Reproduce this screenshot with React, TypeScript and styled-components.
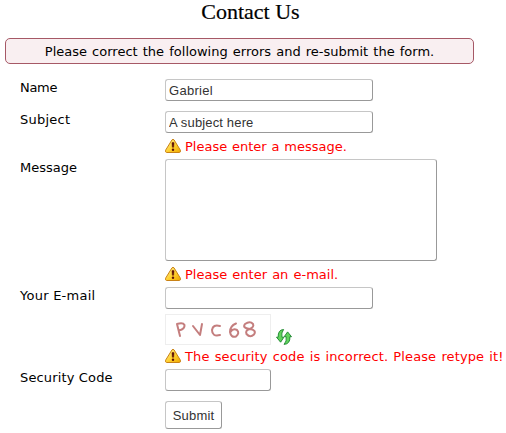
import React from "react";
import styled, { createGlobalStyle } from "styled-components";

const GlobalStyle = createGlobalStyle`
  * { box-sizing: border-box; }
  body {
    margin: 0;
    background: #fff;
    color: #000;
    font-family: "DejaVu Sans", Verdana, sans-serif;
    font-size: 13px;
    overflow: hidden;
  }
`;

const Page = styled.main`
  width: 506px;
  height: 433px;
  overflow: hidden;
`;

const Title = styled.h1`
  margin: 0;
  height: 38px;
  text-align: center;
  font: 400 22px/23px "Liberation Serif", "Times New Roman", serif;
  padding-right: 5px;
  -webkit-text-stroke: 0.2px #000;
`;

const Banner = styled.div`
  width: 469px;
  height: 26px;
  margin-left: 5px;
  padding-top: 1px;
  border: 1px solid #a65866;
  border-radius: 5px;
  background: #f9eff1;
  display: flex;
  align-items: center;
  justify-content: center;
`;

const Text = styled.span<{ $spacing?: number; $words?: number }>`
  white-space: nowrap;
  line-height: 18px;
  letter-spacing: ${(p) => p.$spacing ?? 0}px;
  word-spacing: ${(p) => p.$words ?? 0}px;
`;

const Form = styled.form`
  display: flex;
  flex-direction: column;
  padding-top: 15px;
`;

const Row = styled.div<{ $gap: number }>`
  display: grid;
  grid-template-columns: 145px auto;
  justify-content: start;
  align-items: start;
  padding-left: 20px;
  margin-bottom: ${(p) => p.$gap}px;
`;

const Label = styled.label<{ $spacing?: number }>`
  line-height: 18px;
  white-space: nowrap;
  letter-spacing: ${(p) => p.$spacing ?? 0}px;
`;

const Input = styled.input<{ $width: number; $spacing?: number }>`
  display: block;
  width: ${(p) => p.$width}px;
  height: 22px;
  margin: 0;
  padding: 1px 3px 0;
  border: 1px solid;
  border-color: #c6c6c6 #999 #999 #c6c6c6;
  border-radius: 3px;
  background: #fff;
  color: #333;
  font: 13px "Liberation Sans", Arial, sans-serif;
  letter-spacing: ${(p) => p.$spacing ?? 0}px;
  outline: 0;
`;

const TextArea = styled.textarea`
  display: block;
  width: 272px;
  height: 102px;
  margin: 0;
  border: 1px solid;
  border-color: #c6c6c6 #999 #999 #c6c6c6;
  border-radius: 3px;
  resize: none;
  outline: 0;
`;

const ErrorLine = styled.div<{ $gap: number }>`
  display: flex;
  gap: 4px;
  height: 16px;
  padding-left: 165px;
  margin-bottom: ${(p) => p.$gap}px;
  color: #f00;
`;

const CaptchaLine = styled.div`
  display: flex;
  align-items: flex-end;
  gap: 5px;
  height: 31px;
  padding-left: 165px;
  margin-bottom: 3px;
`;

const CaptchaImage = styled.svg`
  width: 106px;
  height: 31px;
  border: 1px solid #eee;
  flex: none;
`;

const Icon = styled.svg`
  width: 16px;
  height: 16px;
  flex: none;
`;

const Submit = styled.button`
  width: 57px;
  height: 28px;
  margin: 0 0 0 165px;
  padding: 0;
  border: 1px solid;
  border-color: #c6c6c6 #999 #999 #c6c6c6;
  border-radius: 3px;
  background: #fff;
  color: #333;
  font: 13px "Liberation Sans", Arial, sans-serif;
  letter-spacing: 0.2px;
`;

function Warning() {
  return (
    <Icon viewBox="0 0 16 16">
      <defs>
        <linearGradient id="amber" x1="0" y1="0" x2="1" y2="1">
          <stop offset="0" stopColor="#fff3a0" />
          <stop offset=".55" stopColor="#ffd02e" />
          <stop offset="1" stopColor="#eda500" />
        </linearGradient>
      </defs>
      <path
        d="M7 1.8Q8 .9 9 1.8L15.4 12.2Q15.9 14.4 14.4 14.5H1.6Q.1 14.4.6 12.2Z"
        fill="url(#amber)"
        stroke="#c98216"
      />
      <path d="M6.9 4.8Q8 3.9 9.1 4.8L8.7 9.3H7.3Z" fill="#601208" stroke="#601208" strokeWidth=".4" />
      <circle cx="8" cy="11.7" r="1.2" fill="#601208" />
    </Icon>
  );
}

function Refresh() {
  return (
    <Icon viewBox="0 0 16 16">
      <g fill="#62d45d" stroke="#168329" strokeWidth=".9" strokeLinejoin="round">
        <path d="M7.6.5Q1.8.8 2.2 8.2H.5L4.6 13.2 7.9 8.2H5.9Q5 3.7 7.6.5Z" />
        <path d="M8.1 15.4Q14.3 15 13.9 7.7H15.5L11.6 2.9 8.2 7.7H10.2Q11 12.2 8.1 15.4Z" />
      </g>
    </Icon>
  );
}

function Captcha() {
  return (
    <CaptchaImage viewBox="1 1 104 29">
      <g fill="none" stroke="#c47e7e" strokeWidth="2" strokeLinecap="round" strokeLinejoin="round">
        <path d="M15 22 12 10Q18 8 19.5 11 20 15 14 16.5" />
        <path d="M28 12 35 21 37 10" />
        <path d="M55 12Q48 10 47 16 47 23 55 21" />
        <path d="M71 9.5Q65 12 65 18 66 24 71 22.5 75 19 72 16 68 14 65.5 18" />
        <path d="M84.5 15Q77 14 80 10 85 6.5 88 10 89.5 13 84.5 15 80 16.5 81.5 20 85 24 89 20.5 92 16 84.5 15" />
      </g>
    </CaptchaImage>
  );
}

interface FieldProps {
  label: string;
  value?: string;
  width?: number;
  gap: number;
  labelSpacing?: number;
  valueSpacing?: number;
}

function Field({ label, value = "", width = 208, gap, labelSpacing, valueSpacing }: FieldProps) {
  return (
    <Row $gap={gap}>
      <Label $spacing={labelSpacing}>{label}</Label>
      <Input $width={width} $spacing={valueSpacing} defaultValue={value} aria-label={label} />
    </Row>
  );
}

interface ErrorProps {
  text: string;
  gap: number;
  spacing?: number;
  words?: number;
}

function ErrorMessage({ text, gap, spacing, words }: ErrorProps) {
  return (
    <ErrorLine $gap={gap}>
      <Warning />
      <Text $spacing={spacing} $words={words}>{text}</Text>
    </ErrorLine>
  );
}

export default function App() {
  return (
    <Page>
      <GlobalStyle />
      <Title>Contact Us</Title>
      <Banner>
        <Text $words={1}>Please correct the following errors and re-submit the form.</Text>
      </Banner>
      <Form onSubmit={(e) => e.preventDefault()}>
        <Field label="Name" value="Gabriel" gap={10} valueSpacing={0.3} labelSpacing={-0.3} />
        <Field label="Subject" value="A subject here" gap={5} valueSpacing={0.15} labelSpacing={0.25} />
        <ErrorMessage text="Please enter a message." gap={5} words={0.7} />
        <Row $gap={5}>
          <Label>Message</Label>
          <TextArea aria-label="Message" />
        </Row>
        <ErrorMessage text="Please enter an e-mail." gap={5} words={1} />
        <Field label="Your E-mail" gap={5} labelSpacing={0.25} />
        <CaptchaLine>
          <Captcha />
          <Refresh />
        </CaptchaLine>
        <ErrorMessage
          text="The security code is incorrect. Please retype it!"
          gap={5}
          spacing={0.12}
          words={0.9}
        />
        <Field label="Security Code" width={106} gap={10} labelSpacing={0.15} />
        <Submit type="submit">Submit</Submit>
      </Form>
    </Page>
  );
}
